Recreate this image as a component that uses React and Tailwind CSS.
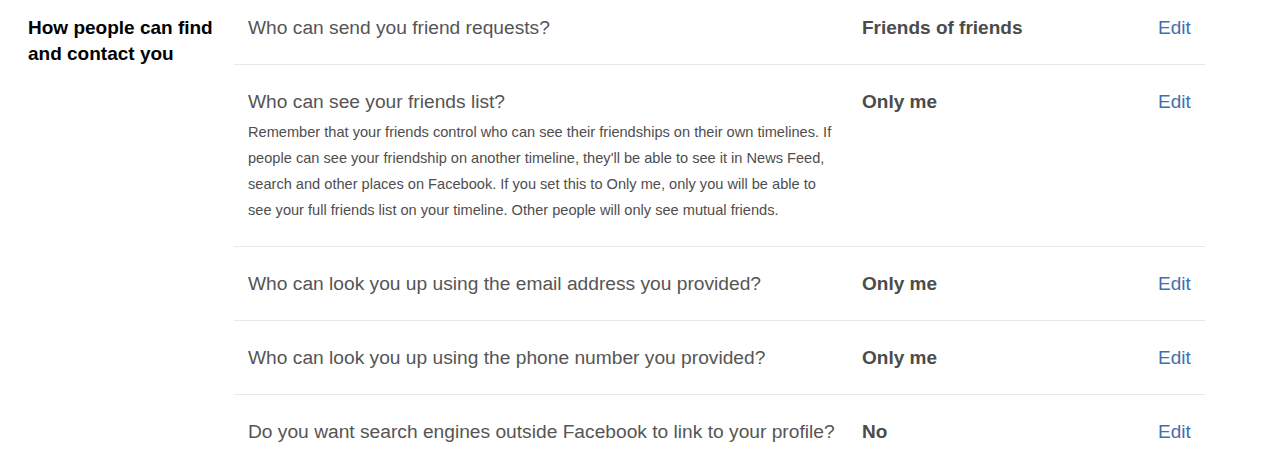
import React from 'react';

const rows = [
  { q: 'Who can send you friend requests?', v: 'Friends of friends' },
  {
    q: 'Who can see your friends list?',
    v: 'Only me',
    desc: [
      'Remember that your friends control who can see their friendships on their own timelines. If',
      "people can see your friendship on another timeline, they'll be able to see it in News Feed,",
      'search and other places on Facebook. If you set this to Only me, only you will be able to',
      'see your full friends list on your timeline. Other people will only see mutual friends.',
    ],
  },
  { q: 'Who can look you up using the email address you provided?', v: 'Only me' },
  { q: 'Who can look you up using the phone number you provided?', v: 'Only me' },
  { q: 'Do you want search engines outside Facebook to link to your profile?', v: 'No' },
];

const SettingRow = ({ row, first }) => (
  <div className={`flex ${first ? 'pt-[15px]' : 'pt-[24px] border-t border-[#e8e8e8]'} pb-[23px]`}>
    <div className="w-[628px] pl-[14px]">
      <div className="text-[19.2px] leading-[26px] text-[#555555]">{row.q}</div>
      {row.desc && (
        <div className="mt-[4px] text-[14.6px] leading-[26px] text-[#4e4e4e]">
          {row.desc.map((l, i) => (
            <div key={i} className="whitespace-nowrap">{l}</div>
          ))}
        </div>
      )}
    </div>
    <div className="w-[296px] text-[19px] leading-[26px] font-bold text-[#4b4b4b]">{row.v}</div>
    <div className="text-[19px] leading-[26px] text-[#3f6fb0]">Edit</div>
  </div>
);

const App = () => {
  return (
    <div className="bg-white min-h-screen font-['Liberation_Sans',Arial,sans-serif]">
      <div className="flex pl-[28px]">
        <div className="w-[206px] shrink-0 pt-[15px] text-[19px] leading-[26px] font-bold text-black">
          How people can find<br />and contact you
        </div>
        <div className="w-[971px]">
          {rows.map((r, i) => (
            <SettingRow key={i} row={r} first={i === 0} />
          ))}
        </div>
      </div>
    </div>
  );
};

export default App;
